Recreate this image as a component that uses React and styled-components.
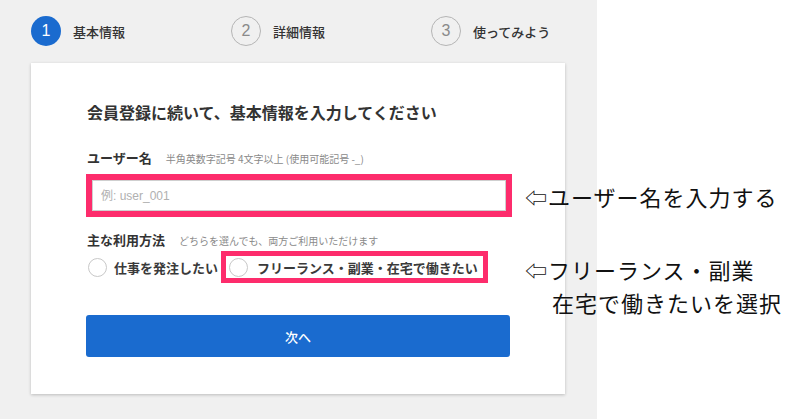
import React from "react";
import styled, { createGlobalStyle } from "styled-components";

const GlobalStyle = createGlobalStyle`
  html, body {
    margin: 0;
    padding: 0;
    background: #ffffff;
    font-family: "Noto Sans CJK JP", "Noto Sans", sans-serif;
    color: #333333;
  }
  * {
    box-sizing: border-box;
  }
`;

const steps = [
  { num: 1, label: "基本情報", active: true },
  { num: 2, label: "詳細情報" },
  { num: 3, label: "使ってみよう" },
];

const App = () => {
  return (
    <>
      <GlobalStyle />
      <Page>
        <Panel>
          <Steps>
            {steps.map((s) => (
              <Step key={s.num}>
                <StepNum $active={s.active}>{s.num}</StepNum>
                <StepLabel>{s.label}</StepLabel>
              </Step>
            ))}
          </Steps>
          <Card>
            <Title>会員登録に続いて、基本情報を入力してください</Title>
            <FieldLabel $gap={24}>
              ユーザー名
              <Hint>半角英数字記号 4文字以上 (使用可能記号 -_)</Hint>
            </FieldLabel>
            <InputMark>
              <Input type="text" placeholder="例: user_001" />
            </InputMark>
            <FieldLabel $gap={13}>
              主な利用方法
              <Hint>どちらを選んでも、両方ご利用いただけます</Hint>
            </FieldLabel>
            <RadioRow>
              <Option>
                <Radio />
                <OptionText>仕事を発注したい</OptionText>
              </Option>
              <OptionMark>
                <Radio />
                <OptionText>フリーランス・副業・在宅で働きたい</OptionText>
              </OptionMark>
            </RadioRow>
            <NextButton>次へ</NextButton>
          </Card>
        </Panel>
        <Note $top={180}>⇦ユーザー名を入力する</Note>
        <Note $top={253}>
          ⇦フリーランス・副業
          <NoteIndent>在宅で働きたいを選択</NoteIndent>
        </Note>
      </Page>
    </>
  );
};

export default App;

const Page = styled.div`
  position: relative;
  display: flex;
  width: 800px;
  height: 419px;
  overflow: hidden;
`;

const Panel = styled.div`
  width: 597px;
  height: 100%;
  background: #f0f0f0;
  padding: 16px 0 0 31px;
`;

const Steps = styled.div`
  display: grid;
  grid-template-columns: repeat(3, 200px);
  height: 30px;
  align-items: center;
`;

const Step = styled.div`
  display: flex;
  align-items: center;
  gap: 12px;
`;

const StepNum = styled.div`
  width: 30px;
  height: 30px;
  border-radius: 50%;
  display: flex;
  align-items: center;
  justify-content: center;
  font-family: "Liberation Sans", Arial, sans-serif;
  font-size: 16px;
  background: ${({ $active }) => ($active ? "#1a6bcf" : "transparent")};
  color: ${({ $active }) => ($active ? "#ffffff" : "#8a8a8a")};
  border: ${({ $active }) => ($active ? "none" : "1.5px solid #b5b5b5")};
`;

const StepLabel = styled.span`
  font-size: 13px;
  font-weight: 500;
  color: #333333;
`;

const Card = styled.div`
  margin-top: 17px;
  width: 534px;
  height: 331px;
  background: #ffffff;
  box-shadow: 0 1px 3px rgba(0, 0, 0, 0.22);
  padding: 37px 56px 0 56px;
`;

const Title = styled.h1`
  margin: 0;
  font-size: 16px;
  line-height: 24px;
  font-weight: 700;
  color: #333333;
`;

const FieldLabel = styled.div`
  margin-top: ${({ $gap }) => $gap}px;
  display: flex;
  align-items: baseline;
  font-size: 13px;
  line-height: 20px;
  font-weight: 700;
  color: #333333;
`;

const Hint = styled.span`
  margin-left: 14px;
  font-size: 10px;
  font-weight: 400;
  color: #8a8a8a;
`;

const InputMark = styled.div`
  margin: 5px 0 0 -1px;
  width: 426px;
  border: 6px solid #fd2c6c;
`;

const Input = styled.input`
  display: block;
  width: 100%;
  height: 31px;
  border: 1px solid #cfcfcf;
  padding: 0 8px;
  font-family: "Liberation Sans", "Noto Sans CJK JP", sans-serif;
  font-size: 12px;
  color: #333333;
  outline: none;
  &::placeholder {
    color: #b0b0b0;
  }
`;

const RadioRow = styled.div`
  display: flex;
  align-items: center;
  height: 32px;
`;

const Option = styled.label`
  display: flex;
  align-items: center;
  gap: 7px;
  margin-left: 1px;
  margin-right: 3px;
`;

const OptionMark = styled(Option)`
  margin: 0;
  height: 32px;
  border: 5px solid #fd2c6c;
  padding: 0 5px 0 3px;
  gap: 9px;
`;

const Radio = styled.span`
  width: 19px;
  height: 19px;
  border-radius: 50%;
  border: 1px solid #c8c8c8;
  background: #ffffff;
`;

const OptionText = styled.span`
  font-size: 13px;
  font-weight: 700;
  color: #3a3a3a;
  white-space: nowrap;
`;

const NextButton = styled.button`
  display: block;
  margin: 32px 0 0 -1px;
  width: 424px;
  height: 42px;
  border: none;
  border-radius: 3px;
  background: #1a6bcf;
  color: #ffffff;
  font-family: "Noto Sans CJK JP", sans-serif;
  font-size: 13px;
  font-weight: 500;
`;

const Note = styled.div`
  position: absolute;
  left: 525px;
  top: ${({ $top }) => $top}px;
  font-size: 22px;
  line-height: 33px;
  letter-spacing: 1px;
  color: #111111;
  white-space: nowrap;
`;

const NoteIndent = styled.div`
  padding-left: 27px;
`;
